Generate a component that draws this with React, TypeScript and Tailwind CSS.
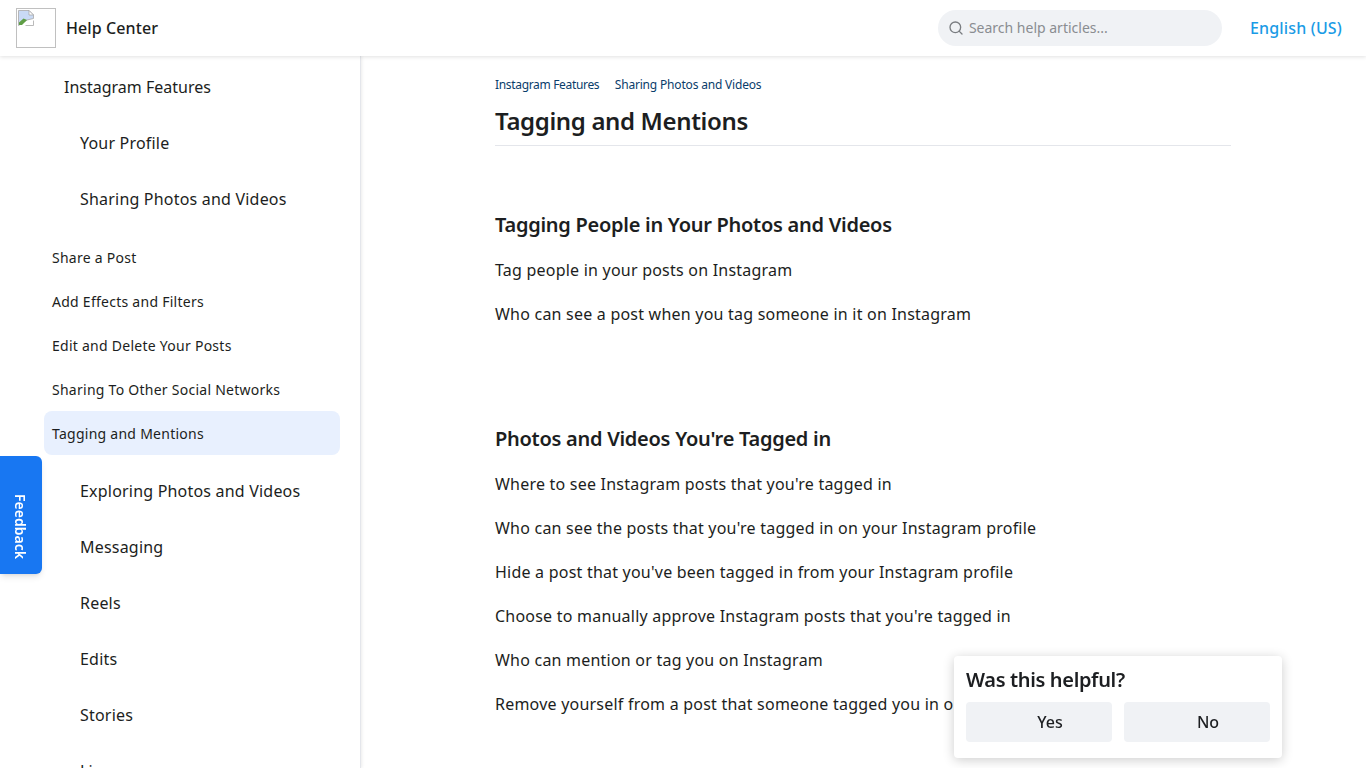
import { Search } from 'lucide-react';

const topItems = ['Your Profile', 'Sharing Photos and Videos'];
const subItems = ['Share a Post', 'Add Effects and Filters', 'Edit and Delete Your Posts', 'Sharing To Other Social Networks'];
const bottomItems = ['Exploring Photos and Videos', 'Messaging', 'Reels', 'Edits', 'Stories', 'Live'];

const sections = [
    {
        title: 'Tagging People in Your Photos and Videos',
        links: ['Tag people in your posts on Instagram', 'Who can see a post when you tag someone in it on Instagram'],
    },
    {
        title: "Photos and Videos You're Tagged in",
        links: [
            "Where to see Instagram posts that you're tagged in",
            "Who can see the posts that you're tagged in on your Instagram profile",
            "Hide a post that you've been tagged in from your Instagram profile",
            "Choose to manually approve Instagram posts that you're tagged in",
            'Who can mention or tag you on Instagram',
            'Remove yourself from a post that someone tagged you in on Instagram',
        ],
    },
];

// Browser's broken image placeholder
const BrokenImage = () => (
    <div className="w-10 h-10 border border-[#c0c0c0] shrink-0 p-px">
        <svg viewBox="0 0 16 16" className="w-4 h-4 block">
            <path d="M0.5 0.5H11L15.5 5V8.5L9 10L0.5 15.5Z" fill="#c9daf5" stroke="#a8a8a8" strokeWidth="0.8" />
            <path d="M1 15V12.5L5.5 8.5L9 10L4 15Z" fill="#5f9e45" />
            <path d="M11 0.5V5H15.5Z" fill="#fff" stroke="#a8a8a8" strokeWidth="0.8" />
            <path d="M7.5 15.5L15.5 10.5V15.5Z" fill="#fff" />
            <path d="M7.5 15.5H15.5V10.5" fill="none" stroke="#a8a8a8" strokeWidth="0.8" />
        </svg>
    </div>
);

const TopItem = ({ label }: { label: string }) => (
    <div className="h-14 flex items-center pl-20 text-[16px] tracking-[0.2px]">{label}</div>
);

export default function App() {
    return (
        <div className="h-[768px] overflow-hidden flex flex-col bg-white text-[#1c1e21] font-['Noto_Sans','Liberation_Sans',sans-serif]">
            <header className="h-14 shrink-0 z-20 flex items-center justify-between pl-4 pr-6 bg-white shadow-[0_1px_4px_rgba(0,0,0,0.12)]">
                <div className="flex items-center gap-2.5">
                    <BrokenImage />
                    <span className="text-[16px] font-medium tracking-[0.1px]">Help Center</span>
                </div>
                <div className="flex items-center gap-7">
                    <div className="w-[284px] h-9 rounded-full bg-[#f0f2f5] flex items-center pl-2.5 gap-[5px] text-[14px] text-[#8a8d91]">
                        <Search className="w-4 h-4 text-[#7a7d81]" strokeWidth={2} />
                        <span className="-mt-0.5">Search help articles...</span>
                    </div>
                    <span className="text-[16px] font-medium tracking-[0.17px] text-[#1a9be6]">English (US)</span>
                </div>
            </header>

            <div className="flex flex-1 min-h-0">
                <aside className="w-[361px] shrink-0 overflow-hidden border-r border-[#e4e6eb] shadow-[1px_0_3px_rgba(0,0,0,0.08)] z-10">
                    <div className="h-[62px] flex items-center pl-16 text-[16px]">Instagram Features</div>
                    <div className="-mt-[3px]">
                        {topItems.map(item => (
                            <TopItem key={item} label={item} />
                        ))}
                    </div>
                    <div className="mt-2 pl-11 pr-5">
                        {subItems.map(item => (
                            <div key={item} className="h-11 flex items-center pl-2 text-[14px] tracking-[0.26px]">
                                {item}
                            </div>
                        ))}
                        <div className="h-11 flex items-center pl-2 text-[14px] tracking-[0.26px] rounded-lg bg-[#e8f0fe]">Tagging and Mentions</div>
                    </div>
                    <div className="mt-2">
                        {bottomItems.map(item => (
                            <TopItem key={item} label={item} />
                        ))}
                    </div>
                </aside>

                <main className="flex-1 pl-[134px]">
                    <div className="w-[736px]">
                        <div className="flex gap-[15.5px] pt-[21px] text-[12px] leading-4 text-[#0a3d6b]">
                            <span className="tracking-[-0.33px]">Instagram Features</span>
                            <span className="tracking-[-0.18px]">Sharing Photos and Videos</span>
                        </div>
                        <h1 className="mt-2.5 pb-1.5 text-[24px] leading-[36px] font-semibold tracking-[-0.35px] border-b border-[#e4e6eb]">Tagging and Mentions</h1>
                        {sections.map((section, i) => (
                            <section key={section.title} className={i === 0 ? 'mt-[62px]' : 'mt-[86px]'}>
                                <h2 className="text-[20px] leading-[34px] font-semibold tracking-[-0.27px]">{section.title}</h2>
                                <div className="mt-1.5">
                                    {section.links.map(link => (
                                        <div key={link} className="h-11 flex items-center text-[16px] tracking-[0.22px]">
                                            {link}
                                        </div>
                                    ))}
                                </div>
                            </section>
                        ))}
                    </div>
                </main>
            </div>

            <button className="fixed left-0 top-[456px] z-30 w-[42px] h-[118px] pt-[22px] pr-0.5 rounded-r-md rounded-l-none bg-[#1877f2] shadow-md flex items-center justify-center">
                <span className="[writing-mode:vertical-rl] text-[14px] font-semibold text-white">Feedback</span>
            </button>

            <div className="fixed left-[954px] top-[656px] z-30 w-[328px] h-[102px] rounded bg-white p-3 shadow-[0_2px_12px_rgba(0,0,0,0.2)]">
                <div className="text-[20px] leading-[24px] font-semibold tracking-[-0.35px]">Was this helpful?</div>
                <div className="mt-2.5 flex gap-3">
                    <div className="flex-1 h-10 pl-[22px] rounded bg-[#f0f2f5] flex items-center justify-center text-[16px] font-medium">Yes</div>
                    <div className="flex-1 h-10 pl-[22px] rounded bg-[#f0f2f5] flex items-center justify-center text-[16px] font-medium">No</div>
                </div>
            </div>
        </div>
    );
}
